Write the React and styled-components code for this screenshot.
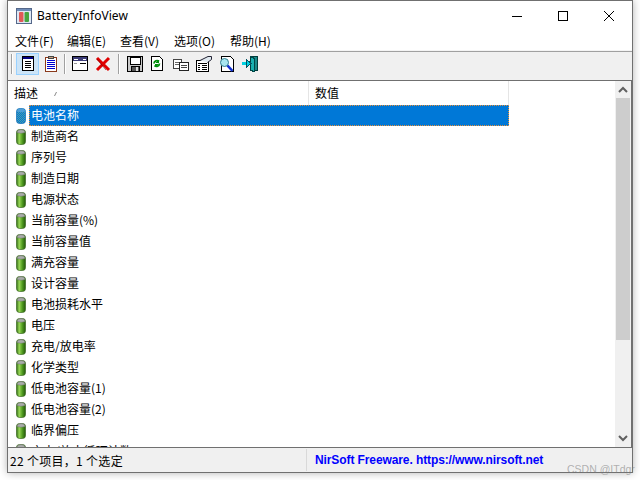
import React from "react";
import styled, { createGlobalStyle } from "styled-components";

const Global = createGlobalStyle`
  html, body { margin: 0; padding: 0; background: #fff; overflow: hidden; }
  body { width: 640px; height: 480px; }
`;
const Page = styled.div`
  width: 640px; height: 480px; overflow: hidden; box-sizing: border-box;
  padding-left: 7px; position: relative; background: #fff;
  font-family: "Noto Sans CJK SC", sans-serif; font-size: 12px; color: #000;
`;
const Win = styled.div`
  width: 626px; height: 473px; box-sizing: border-box; border: 1px solid #707070;
  display: flex; flex-direction: column; background: #fff;
  box-shadow: 0 0 8px rgba(0,0,0,.3);
`;
const TitleBar = styled.div`
  height: 29px; flex: none; display: flex; align-items: center; padding-left: 8px;
`;
const TitleText = styled.span`
  margin-left: 5px; font-size: 12px; font-family: "Noto Sans", sans-serif; letter-spacing: 0.05px; flex: 1;
`;
const Ctl = styled.div`
  width: 46px; height: 29px; display: flex; align-items: center; justify-content: center;
`;
const MenuBar = styled.div`
  height: 21px; flex: none; display: flex; align-items: center; padding-left: 7px; border-bottom: 1px solid #a0a0a0; box-shadow: inset 0 -1px #f4f4f4;
`;
const MenuItem = styled.span`
  width: ${p => p.$w}px; white-space: nowrap;
`;
const Toolbar = styled.div`
  flex: none; background: #f0f0f0; display: flex; align-items: flex-start; padding-left: 3px; padding-top: 1px; height: 27px; border-bottom: 1px solid #707070;
`;
const Sep = styled.div`
  width: 1px; height: 20px; background: #a0a0a0; border-right: 1px solid #fff; margin: 1px ${p => p.$r}px 0 ${p => p.$l}px;
`;
const TBtn = styled.div`
  width: 23px; height: 22px; box-sizing: border-box; display: flex; align-items: center; justify-content: center;
  border: 1px solid ${p => (p.$on ? "#99d1ff" : "transparent")};
  background: ${p => (p.$on ? "#cce4f7" : "transparent")};
`;
const Body = styled.div`
  flex: 1; min-height: 0; display: flex; overflow: hidden; background: #fff;
`;
const ListPane = styled.div`
  flex: 1; min-width: 0; overflow: hidden; display: flex; flex-direction: column;
`;
const Header = styled.div`
  height: 24px; flex: none; display: flex;
`;
const HCell = styled.div`
  width: ${p => p.$w}px; box-sizing: border-box; padding: 0 0 2px 6px; border-right: 1px solid #e5e5e5;
  display: flex; align-items: center; position: relative;
`;
const SortMark = styled.span`
  position: absolute; left: 46px; top: 11px; width: 3px; height: 3px;
`;
const Row = styled.div`
  height: 21px; flex: none; display: flex; align-items: center; padding-left: 8px;
`;
const Label = styled.div`
  margin-left: 3px; width: 480px; height: 21px; box-sizing: border-box; padding-left: 2px; line-height: 20px; white-space: nowrap;
  background: ${p => (p.$sel ? "#0078d7" : "transparent")};
  color: ${p => (p.$sel ? "#fff" : "#000")};
  outline: ${p => (p.$sel ? "1px dotted #e8903a" : "none")};
  outline-offset: -1px;
`;
const Scroll = styled.div`
  width: 16px; flex: none; background: #f0f0f0; display: flex; flex-direction: column; border-right: 1px solid #707070;
`;
const SBtn = styled.div`
  height: 17px; flex: none; display: flex; align-items: center; justify-content: center;
`;
const STrack = styled.div`
  flex: 1; display: flex; flex-direction: column;
`;
const SThumb = styled.div`
  height: 242px; background: #cdcdcd; margin: 0 1px;
`;
const Status = styled.div`
  height: 24px; flex: none; background: #f0f0f0; border-top: 1px solid #707070; display: flex; align-items: center;
`;
const StatusLeft = styled.div`
  width: 299px; height: 22px; box-sizing: border-box; padding-left: 2px; line-height: 24px; border-right: 1px solid #d9d9d9;
  letter-spacing: 0.3px; white-space: nowrap;
`;
const StatusLink = styled.div`
  margin-left: 8px; color: #0000ff; font-family: "Liberation Sans", sans-serif; font-weight: 700; font-size: 12px; letter-spacing: -0.1px; white-space: nowrap;
`;
const Mark = styled.div`
  position: absolute; left: 567px; top: 463px; font-family: "Liberation Sans", sans-serif; font-size: 10.5px; color: rgba(120,120,120,.55); white-space: nowrap;
`;

const Battery = ({ sel, id }) => (
  <svg width="10" height="16" viewBox="0 0 10 16" style={{ flex: "none" }}>
    <defs>
      <linearGradient id={id} x1="0" x2="1" y1="0" y2="0">
        <stop offset="0" stopColor="#2f6b12" />
        <stop offset="0.3" stopColor="#9ad858" />
        <stop offset="0.65" stopColor="#4f9a1f" />
        <stop offset="1" stopColor="#24560c" />
      </linearGradient>
      <pattern id={id + "d"} width="2" height="2" patternUnits="userSpaceOnUse">
        <rect width="2" height="2" fill="#0078d7" />
        <rect width="1" height="1" fill="#4f9fa8" />
        <rect x="1" y="1" width="1" height="1" fill="#4f9fa8" />
      </pattern>
    </defs>
    <rect x="0.5" y="0.5" width="9" height="15" rx="3" fill={sel ? `url(#${id}d)` : `url(#${id})`} stroke={sel ? "#0a6ab8" : "#3c6a24"} strokeWidth=".7" />
    <path d="M1 3.5 Q1 .6 5 .6 Q9 .6 9 3.5 Q5 5 1 3.5Z" fill={sel ? "#4f9fd8" : "#a9aca9"} stroke={sel ? "none" : "#6d6f6d"} strokeWidth=".5" />
  </svg>
);

const TitleIcon = () => (
  <svg width="16" height="16" viewBox="0 0 16 16">
    <rect x=".5" y=".5" width="15" height="15" fill="#dfe8f4" stroke="#55688a" />
    <rect x="1" y="1" width="14" height="2" fill="#6f8cb8" />
    <rect x="3" y="4" width="4.5" height="10" rx="1" fill="#e05a58" />
    <rect x="8.5" y="4" width="4.5" height="10" rx="1" fill="#47a63f" />
  </svg>
);

const I = ({ children }) => <svg width="16" height="16" viewBox="0 0 16 16" shapeRendering="crispEdges">{children}</svg>;

const icons = [
  <I key="a"><rect x="2.5" y=".5" width="11" height="14" fill="#fff" stroke="#000" /><rect x="3" y="1" width="10" height="2" fill="#000080" /><path d="M5 5.5h6M5 7.5h6M5 9.5h6M5 11.5h6" stroke="#000" /></I>,
  <I key="b"><rect x="2.5" y="1.5" width="11" height="14" fill="#fff" stroke="#8a3a1c" strokeWidth="1.4" /><rect x="5.5" y=".5" width="5" height="2" fill="#c8a080" stroke="#444" /><path d="M4 4.5h8M4 6.5h8M4 8.5h8M4 10.5h8M4 12.5h8" stroke="#0000d0" /></I>,
  <I key="c"><rect x=".5" y=".5" width="15" height="14" fill="#fff" stroke="#000" /><rect x="1" y="1" width="14" height="4" fill="#3c3c78" /><path d="M2 3h4M11 3h3" stroke="#fff" /><path d="M8 7.5h6" stroke="#000" /><path d="M2 7.5h3" stroke="#999" /></I>,
  <I key="d"><path d="M2 2 L14 14 M14 2 L2 14" stroke="#e00000" strokeWidth="3" shapeRendering="auto" /><path d="M2 3 L11 14" stroke="#700" strokeWidth=".6" shapeRendering="auto" /></I>,
  <I key="e"><rect x=".5" y=".5" width="15" height="15" fill="#c8c8c8" stroke="#000" /><rect x="3" y="1" width="10" height="7" fill="#fff" stroke="#000" /><rect x="4" y="10.5" width="8" height="5" fill="#555" stroke="#000" /><rect x="9" y="11" width="2" height="4" fill="#ddd" /></I>,
  <I key="f"><path d="M1.5 .5h8l3 3v11h-11z" fill="#fff" stroke="#000" /><path d="M4 7.5 a3 3 0 0 1 5-2 M9.5 7.5a3 3 0 0 1-5 2" fill="none" stroke="#00900a" strokeWidth="1.8" shapeRendering="auto" /><path d="M9 3v4h-3zM5 12v-4h3z" fill="#00900a" /></I>,
  <I key="g"><rect x=".5" y="3.5" width="8" height="9" fill="#fff" stroke="#444" /><path d="M2 6.5h5M2 8.5h5" stroke="#666" /><rect x="6.5" y="6.5" width="9" height="8" fill="#fff" stroke="#222" /><path d="M8 9.5h6M8 11.5h6" stroke="#444" /></I>,
  <I key="h"><rect x=".5" y="4.5" width="12" height="11" fill="#fff" stroke="#000" /><path d="M2 7.5h9M2 9.5h2M6 9.5h5M2 11.5h2M6 11.5h5M2 13.5h2M6 13.5h5" stroke="#000" /><path d="M4 4.5 L12 .5h3.5v3l-4 3" fill="#dfe8ef" stroke="#223" shapeRendering="auto" /></I>,
  <I key="i"><path d="M2.5 .5h9l3 3v12h-12z" fill="#fff" stroke="#000" /><circle cx="5.5" cy="6.5" r="4" fill="#a8e6f0" stroke="#308090" shapeRendering="auto" /><path d="M8.5 9.5 L13.5 15" stroke="#1030d0" strokeWidth="2.6" shapeRendering="auto" /></I>,
  <I key="j"><path d="M8.5 .5h7v14h-7z" fill="#1a8a8a" stroke="#003c3c" /><path d="M8.5 .5 L12.5 2.5V16L8.5 14" fill="#18b0b0" stroke="#004848" /><rect x="0" y="6" width="5" height="3" fill="#00d0e0" /><path d="M4.5 3.5 L9 7.5 L4.5 11.5z" fill="#00d0e0" stroke="#005060" /></I>,
];

const rows = ["电池名称","制造商名","序列号","制造日期","电源状态","当前容量(%)","当前容量值","满充容量","设计容量","电池损耗水平","电压","充电/放电率","化学类型","低电池容量(1)","低电池容量(2)","临界偏压","充电/放电循环计数"];

export default function App() {
  return (
    <Page>
      <Global />
      <Win>
        <TitleBar>
          <TitleIcon />
          <TitleText>BatteryInfoView</TitleText>
          <Ctl><svg width="10" height="10" viewBox="0 0 10 10" shapeRendering="crispEdges"><path d="M0 5.5h10" stroke="#000" /></svg></Ctl>
          <Ctl><svg width="10" height="10" viewBox="0 0 10 10" shapeRendering="crispEdges"><rect x=".5" y=".5" width="9" height="9" fill="none" stroke="#000" /></svg></Ctl>
          <Ctl><svg width="10" height="10" viewBox="0 0 10 10"><path d="M0 0L10 10M10 0L0 10" stroke="#000" /></svg></Ctl>
        </TitleBar>
        <MenuBar>
          <MenuItem $w={52}>文件(F)</MenuItem>
          <MenuItem $w={53}>编辑(E)</MenuItem>
          <MenuItem $w={54}>查看(V)</MenuItem>
          <MenuItem $w={56}>选项(O)</MenuItem>
          <MenuItem $w={50}>帮助(H)</MenuItem>
        </MenuBar>
        <Toolbar>
          <Sep $l={0} $r={3} />
          <TBtn $on>{icons[0]}</TBtn>
          <TBtn>{icons[1]}</TBtn>
          <Sep $l={2} $r={2} />
          <TBtn>{icons[2]}</TBtn>
          <TBtn>{icons[3]}</TBtn>
          <Sep $l={4} $r={3} />
          {icons.slice(4).map((ic, i) => <TBtn key={i}>{ic}</TBtn>)}
        </Toolbar>
        <Body>
          <ListPane>
            <Header>
              <HCell $w={301}>描述<SortMark><svg width="3" height="4" viewBox="0 0 3 4" style={{ display: "block" }}><path d="M2.5 0L.5 4" stroke="#888" /></svg></SortMark></HCell>
              <HCell $w={200}>数值</HCell>
            </Header>
            {rows.map((r, i) => (
              <Row key={r}>
                <Battery sel={i === 0} id={`b${i}`} />
                <Label $sel={i === 0}>{r}</Label>
              </Row>
            ))}
          </ListPane>
          <Scroll>
            <SBtn><svg width="10" height="7" viewBox="0 0 10 7"><path d="M1 6L5 2L9 6" fill="none" stroke="#606060" strokeWidth="2" /></svg></SBtn>
            <STrack><SThumb /></STrack>
            <SBtn><svg width="10" height="7" viewBox="0 0 10 7"><path d="M1 1L5 5L9 1" fill="none" stroke="#606060" strokeWidth="2" /></svg></SBtn>
          </Scroll>
        </Body>
        <Status>
          <StatusLeft>22 个项目，1 个选定</StatusLeft>
          <StatusLink>NirSoft Freeware. https://www.nirsoft.net</StatusLink>
        </Status>
      </Win>
      <Mark>CSDN @ITdgr</Mark>
    </Page>
  );
}
